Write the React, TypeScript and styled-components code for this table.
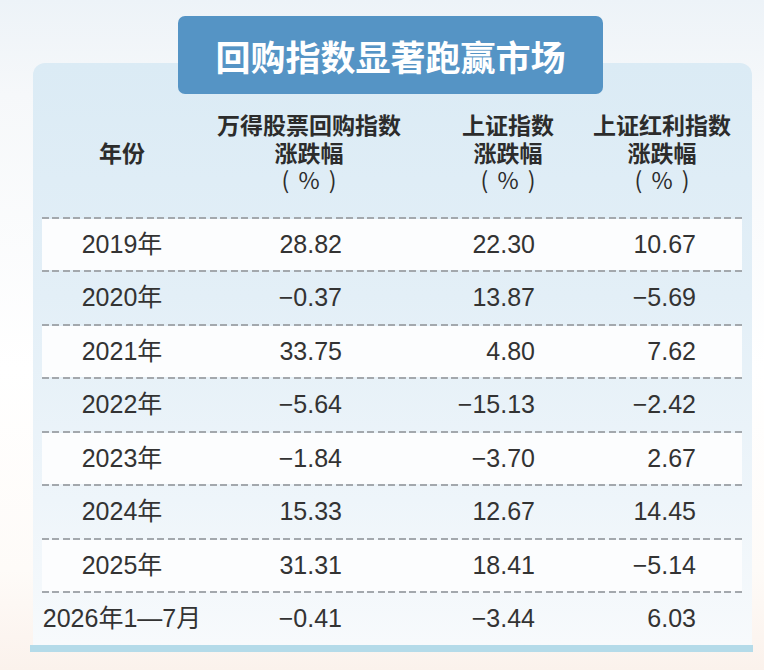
import React from 'react';
import styled, { createGlobalStyle } from 'styled-components';

type Row = { year: string; a: string; b: string; c: string };

const rows: Row[] = [
  { year: '2019年', a: '28.82', b: '22.30', c: '10.67' },
  { year: '2020年', a: '−0.37', b: '13.87', c: '−5.69' },
  { year: '2021年', a: '33.75', b: '4.80', c: '7.62' },
  { year: '2022年', a: '−5.64', b: '−15.13', c: '−2.42' },
  { year: '2023年', a: '−1.84', b: '−3.70', c: '2.67' },
  { year: '2024年', a: '15.33', b: '12.67', c: '14.45' },
  { year: '2025年', a: '31.31', b: '18.41', c: '−5.14' },
  { year: '2026年1—7月', a: '−0.41', b: '−3.44', c: '6.03' },
];

const Unit = () => <UnitLine>( % )</UnitLine>;

const App: React.FC = () => {
  return (
    <Page>
      <GlobalStyle />
      <Title>回购指数显著跑赢市场</Title>
      <Panel>
        <Header>
          <HeadCell>年份</HeadCell>
          <HeadCell>
            <span>万得股票回购指数</span>
            <span>涨跌幅</span>
            <Unit />
          </HeadCell>
          <HeadCell>
            <span>上证指数</span>
            <span>涨跌幅</span>
            <Unit />
          </HeadCell>
          <HeadCell>
            <span>上证红利指数</span>
            <span>涨跌幅</span>
            <Unit />
          </HeadCell>
        </Header>
        {rows.map((r, i) => (
          <React.Fragment key={r.year}>
            <Divider />
            <Line $light={i % 2 === 0}>
              <Year>{r.year}</Year>
              <Num $pr={74}>{r.a}</Num>
              <Num $pr={65}>{r.b}</Num>
              <Num $pr={28}>{r.c}</Num>
            </Line>
          </React.Fragment>
        ))}
      </Panel>
      <BottomBar />
    </Page>
  );
};

const GlobalStyle = createGlobalStyle`
  body {
    margin: 0;
    font-family: "Noto Sans CJK SC", sans-serif;
  }
`;

const Page = styled.div`
  box-sizing: border-box;
  width: 764px;
  height: 670px;
  padding-top: 16px;
  display: flex;
  flex-direction: column;
  background: linear-gradient(180deg, #edf3f8 0%, #f6f8fa 14%, #ffffff 55%, #fefbf8 85%, #fbf2ec 100%);
  overflow: hidden;
`;

const Title = styled.h1`
  position: relative;
  z-index: 1;
  box-sizing: border-box;
  width: 425px;
  height: 78px;
  margin: 0 0 -31px 178px;
  display: flex;
  align-items: center;
  justify-content: center;
  background: #5594c5;
  border-radius: 7px;
  color: #ffffff;
  font-family: "Noto Sans CJK SC", sans-serif;
  font-size: 35px;
  font-weight: 700;
  line-height: 1;
`;

const Panel = styled.div`
  box-sizing: border-box;
  width: 719px;
  margin-left: 33px;
  padding: 0 10px 0 9px;
  border-radius: 12px 12px 0 0;
  background: linear-gradient(180deg, #dbebf5 0%, #e3eff7 40%, #eef5fa 75%, #f7fafc 100%);
`;

const Grid = styled.div`
  display: grid;
  grid-template-columns: 160px 214px 184px 124px 1fr;
  align-items: center;
`;

const Header = styled(Grid)`
  padding: 48px 0 23px;
`;

const HeadCell = styled.div`
  display: flex;
  flex-direction: column;
  align-items: center;
  white-space: nowrap;
  color: #2c2c2c;
  font-family: "Noto Sans CJK SC", sans-serif;
  font-size: 23px;
  font-weight: 700;
  line-height: 27.5px;
`;

const UnitLine = styled.span`
  font-weight: 400;
  letter-spacing: 2px;
  padding-left: 2px;
`;

const Divider = styled.div`
  height: 2px;
  background: repeating-linear-gradient(90deg, #a3a8ad 0 7px, transparent 7px 10.5px);
`;

const Line = styled(Grid)<{ $light: boolean }>`
  height: 51.5px;
  background: ${(p) => (p.$light ? '#fcfdfe' : 'transparent')};
  color: #333333;
  font-family: "Liberation Sans", "Noto Sans CJK SC", sans-serif;
  font-size: 25px;
  line-height: 1;
`;

const Year = styled.div`
  text-align: center;
  white-space: nowrap;
`;

const Num = styled.div<{ $pr: number }>`
  text-align: right;
  padding-right: ${(p) => p.$pr}px;
  white-space: nowrap;
`;

const BottomBar = styled.div`
  width: 723px;
  height: 7px;
  margin-left: 30px;
  background: #b4dbe9;
`;

export default App;
